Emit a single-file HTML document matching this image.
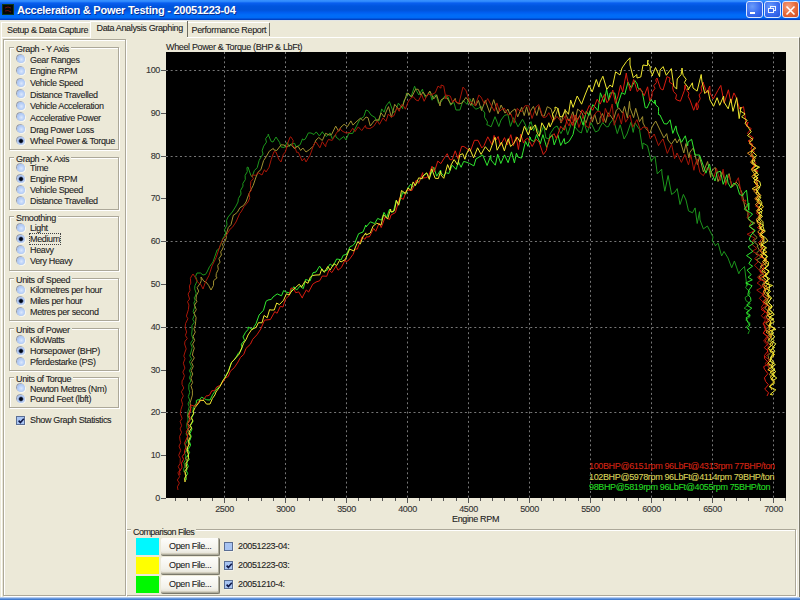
<!DOCTYPE html>
<html><head><meta charset="utf-8"><style>
*{margin:0;padding:0;box-sizing:border-box}
html,body{width:800px;height:600px;overflow:hidden;background:#ece9d8;font-family:"Liberation Sans",sans-serif;font-size:9.0px;color:#1e1e1e}
.abs{position:absolute}
.t{position:absolute;white-space:nowrap;line-height:10px;letter-spacing:-0.35px;-webkit-text-stroke-width:0.1px}
#title{position:absolute;left:0;top:0;width:800px;height:20px;background:linear-gradient(to bottom,#3a93ff 0px,#2c86fc 1.5px,#0a5ff0 3px,#0055de 6px,#0053da 10px,#005ef0 12.5px,#006cf8 15px,#006af6 18px,#0044c8 19px,#0040c0 20px)}
#title .tt{position:absolute;left:17px;top:4.70px;font-weight:bold;font-size:11px;line-height:11px;color:#fff;letter-spacing:-0.25px;white-space:nowrap;text-shadow:1px 1px 0 #0a3090}
.tb{position:absolute;top:1px;width:17px;height:17px;border:1px solid #dce8ff;border-radius:3px;background:radial-gradient(circle at 35% 30%,#6a9cfa,#3a6cf0 55%,#2454d8)}
.tb.c{background:radial-gradient(circle at 35% 30%,#f4a080,#e46838 55%,#cc4a24)}
#sep{position:absolute;left:0;top:20px;width:800px;height:1px;background:#e2e4e4}
.tabbox{position:absolute;border-top:1px solid #fff;border-left:1px solid #fff}
.page{position:absolute;left:1px;top:37px;width:799px;height:560px;border-top:1px solid #fff;border-left:1px solid #fff;border-right:1px solid #7c7a6c;box-shadow:inset -1px 0 0 #f4f2ea}
.etch{position:absolute;border:1px solid #aca899;box-shadow:1px 1px 0 #fff, inset 1px 1px 0 #fff}
.grp{position:absolute;left:9px;width:110px;border:1px solid #aca899;box-shadow:1px 1px 0 #fff, inset 1px 1px 0 #fff}
.gt{left:14px;padding:0 2px;background:#ece9d8}
.rb{position:absolute;left:17px;width:8.4px;height:8.4px;border-radius:50%;background:radial-gradient(circle at 55% 55%,#dce8fc,#b0caf6 55%,#98b4e8);box-shadow:-0.8px -0.8px 0 #8a92a4, 0.8px 0.8px 0 #fbfbf6}
.dot{position:absolute;left:1.2px;top:1.2px;width:6px;height:6px;border-radius:50%;background:radial-gradient(circle,#000818 0,#000818 1.4px,rgba(20,30,80,0.5) 2.2px,rgba(0,0,0,0) 3px)}
.focus{outline:1px dotted #444;outline-offset:0px}
.yl{left:128px;width:32px;text-align:right;color:#333}
.xl{width:40px;text-align:center;color:#333}
.sw{position:absolute;left:136px;width:23px;height:17px}
.btn{position:absolute;left:161px;width:59px;height:18px;background:linear-gradient(#fdfdfb,#f2f1ea 70%,#e2dfd2);border-radius:2px;box-shadow:inset -1px -1px 0 #b0ae9e, inset 0 -2px 0 #d4d0c0;border-right:1px solid #7a786a;border-bottom:1px solid #7a786a}
.cb{position:absolute;left:224px;width:8.6px;height:8.6px;border:1px solid #5a6e94;background:#a8c4f2;box-shadow:0.6px 0.6px 0 #fafaf4}
.leg{left:589px;width:186px;overflow:hidden}
</style></head><body>
<div id="title">
<div style="position:absolute;left:2px;top:4px;width:12px;height:11px;background:#060806;border:1px solid #103a18"><svg width="10" height="9" style="position:absolute;left:0;top:0"><path d="M2 3 Q5 1 8 3 M2 6 Q5 4.5 8 7" stroke="#6a1010" stroke-width="1" fill="none"/></svg></div>
<div class="tt">Acceleration &amp; Power Testing - 20051223-04</div>
<div class="tb" style="left:746px"><div style="position:absolute;left:2.8px;top:9.6px;width:5.6px;height:2.4px;background:#fff"></div></div>
<div class="tb" style="left:764px"><div style="position:absolute;left:4.6px;top:4px;width:6px;height:4.6px;border:1px solid #f0f4ff;border-top-width:1.6px"></div><div style="position:absolute;left:3px;top:6.2px;width:5.6px;height:4.6px;border:1px solid #f0f4ff;border-top-width:1.6px;background:#3a6aea"></div></div>
<div class="tb c" style="left:782px"><svg width="15" height="15" style="position:absolute;left:0;top:0"><path d="M3.5 4.5 L11.5 12.5 M11.5 4.5 L3.5 12.5" stroke="#fff" stroke-width="1.6"/></svg></div>
</div>
<div id="sep"></div>
<div class="page"></div>
<div class="tabbox" style="left:1px;top:22px;width:90px;height:15px"></div>
<div class="abs" style="left:90px;top:21px;width:97px;height:17px;background:#ece9d8;border-top:1px solid #fff;border-left:1px solid #fff"></div>
<div class="abs" style="left:187px;top:21px;width:1px;height:16px;background:#6e6c60"></div>
<div class="tabbox" style="left:188px;top:22px;width:81px;height:15px;border-left:none"></div>
<div class="abs" style="left:269px;top:23px;width:1px;height:13px;background:#7a786c"></div>
<div class="t" style="left:7.0px;top:24.88px;">Setup &amp; Data Capture</div>
<div class="t" style="left:96.5px;top:23.28px;">Data Analysis Graphing</div>
<div class="t" style="left:191.5px;top:24.98px;">Performance Report</div>
<div class="etch" style="left:3px;top:39px;width:123px;height:557px"></div>
<div class="grp" style="top:47px;height:103px"></div><div class="t gt" style="top:44.28px">Graph - Y Axis</div><b class="rb" style="top:55px"></b><div class="t" style="left:30px;top:54.58px;">Gear Ranges</div><b class="rb" style="top:67px"></b><div class="t" style="left:30px;top:66.24px;">Engine RPM</div><b class="rb" style="top:79px"></b><div class="t" style="left:30px;top:77.90px;">Vehicle Speed</div><b class="rb" style="top:90px"></b><div class="t" style="left:30px;top:89.56px;">Distance Travelled</div><b class="rb" style="top:102px"></b><div class="t" style="left:30px;top:101.22px;">Vehicle Acceleration</div><b class="rb" style="top:113px"></b><div class="t" style="left:30px;top:112.88px;">Accelerative Power</div><b class="rb" style="top:125px"></b><div class="t" style="left:30px;top:124.54px;">Drag Power Loss</div><b class="rb" style="top:137px"><i class="dot"></i></b><div class="t" style="left:30px;top:136.20px;">Wheel Power &amp; Torque</div><div class="grp" style="top:157px;height:53px"></div><div class="t gt" style="top:154.28px">Graph - X Axis</div><b class="rb" style="top:164px"></b><div class="t" style="left:30px;top:163.18px;">Time</div><b class="rb" style="top:175px"><i class="dot"></i></b><div class="t" style="left:30px;top:174.18px;">Engine RPM</div><b class="rb" style="top:186px"></b><div class="t" style="left:30px;top:185.18px;">Vehicle Speed</div><b class="rb" style="top:197px"></b><div class="t" style="left:30px;top:196.18px;">Distance Travelled</div><div class="grp" style="top:216px;height:55px"></div><div class="t gt" style="top:213.28px">Smoothing</div><b class="rb" style="top:224px"></b><div class="t" style="left:30px;top:223.18px;">Light</div><b class="rb" style="top:235px"><i class="dot"></i></b><div class="t" style="left:30px;top:234.18px;"><span class="focus">Medium</span></div><b class="rb" style="top:246px"></b><div class="t" style="left:30px;top:245.18px;">Heavy</div><b class="rb" style="top:257px"></b><div class="t" style="left:30px;top:256.18px;">Very Heavy</div><div class="grp" style="top:278px;height:43px"></div><div class="t gt" style="top:275.28px">Units of Speed</div><b class="rb" style="top:286px"></b><div class="t" style="left:30px;top:285.18px;">Kilometres per hour</div><b class="rb" style="top:297px"><i class="dot"></i></b><div class="t" style="left:30px;top:296.18px;">Miles per hour</div><b class="rb" style="top:308px"></b><div class="t" style="left:30px;top:307.18px;">Metres per second</div><div class="grp" style="top:328px;height:43px"></div><div class="t gt" style="top:325.28px">Units of Power</div><b class="rb" style="top:336px"></b><div class="t" style="left:30px;top:335.18px;">KiloWatts</div><b class="rb" style="top:347px"><i class="dot"></i></b><div class="t" style="left:30px;top:346.18px;">Horsepower (BHP)</div><b class="rb" style="top:358px"></b><div class="t" style="left:30px;top:357.18px;">Pferdestarke (PS)</div><div class="grp" style="top:377px;height:31px"></div><div class="t gt" style="top:374.28px">Units of Torque</div><b class="rb" style="top:384px"></b><div class="t" style="left:30px;top:383.58px;">Newton Metres (Nm)</div><b class="rb" style="top:395px"><i class="dot"></i></b><div class="t" style="left:30px;top:394.38px;">Pound Feet (lbft)</div>
<div class="cb" style="left:16px;top:415.5px;width:9px;height:9px"><svg width="9" height="9" style="position:absolute;left:0;top:0"><path d="M1.6 3.6 L3.4 5.6 L6.8 1.8" stroke="#101848" stroke-width="1.6" fill="none"/></svg></div>
<div class="t" style="left:30px;top:415.48px;">Show Graph Statistics</div>
<div class="t" style="left:166px;top:41.88px;">Wheel Power &amp; Torque (BHP &amp; LbFt)</div>
<svg width="620" height="446" style="position:absolute;left:166px;top:52px;background:#000"><line x1="58.5" y1="0" x2="58.5" y2="446" stroke="#767676" stroke-width="1" stroke-dasharray="2,2.67"/><line x1="119.5" y1="0" x2="119.5" y2="446" stroke="#767676" stroke-width="1" stroke-dasharray="2,2.67"/><line x1="180.5" y1="0" x2="180.5" y2="446" stroke="#767676" stroke-width="1" stroke-dasharray="2,2.67"/><line x1="241.5" y1="0" x2="241.5" y2="446" stroke="#767676" stroke-width="1" stroke-dasharray="2,2.67"/><line x1="302.5" y1="0" x2="302.5" y2="446" stroke="#767676" stroke-width="1" stroke-dasharray="2,2.67"/><line x1="363.5" y1="0" x2="363.5" y2="446" stroke="#767676" stroke-width="1" stroke-dasharray="2,2.67"/><line x1="424.5" y1="0" x2="424.5" y2="446" stroke="#767676" stroke-width="1" stroke-dasharray="2,2.67"/><line x1="485.5" y1="0" x2="485.5" y2="446" stroke="#767676" stroke-width="1" stroke-dasharray="2,2.67"/><line x1="546.5" y1="0" x2="546.5" y2="446" stroke="#767676" stroke-width="1" stroke-dasharray="2,2.67"/><line x1="607.5" y1="0" x2="607.5" y2="446" stroke="#767676" stroke-width="1" stroke-dasharray="2,2.67"/><line x1="0" y1="360.5" x2="620" y2="360.5" stroke="#767676" stroke-width="1" stroke-dasharray="2,2.67"/><line x1="0" y1="275.5" x2="620" y2="275.5" stroke="#767676" stroke-width="1" stroke-dasharray="2,2.67"/><line x1="0" y1="189.5" x2="620" y2="189.5" stroke="#767676" stroke-width="1" stroke-dasharray="2,2.67"/><line x1="0" y1="104.5" x2="620" y2="104.5" stroke="#767676" stroke-width="1" stroke-dasharray="2,2.67"/><line x1="0" y1="18.5" x2="620" y2="18.5" stroke="#767676" stroke-width="1" stroke-dasharray="2,2.67"/><polyline points="18.0,420.0 17.6,417.0 18.9,414.4 17.9,410.5 19.7,407.5 19.8,403.9 18.7,401.2 20.8,397.8 19.0,392.9 21.5,388.5 21.4,384.4 20.0,381.8 21.9,378.7 21.0,375.8 20.7,372.3 22.0,368.0 21.7,363.3 21.8,359.8 23.3,354.8 22.0,351.9 23.7,348.1 22.3,344.6 23.8,340.2 22.8,337.1 22.9,332.3 24.9,329.0 23.4,325.7 25.0,321.9 23.4,318.8 25.5,314.6 23.5,309.7 25.6,306.8 23.8,303.8 25.0,300.0 26.2,295.4 24.6,291.3 27.1,287.4 25.6,282.5 26.2,277.8 25.9,273.6 28.4,270.1 26.7,267.3 28.6,262.7 27.1,259.5 28.9,254.7 27.9,250.9 29.2,248.2 28.1,245.7 29.0,245.0 30.2,241.2 28.7,236.9 28.9,233.8 31.2,228.9 29.6,224.3 31.0,221.0 34.5,221.0 37.0,223.0 39.5,222.4 41.0,220.0 43.5,214.7 47.0,210.0 51.1,197.9 52.0,198.0 54.0,194.8 57.0,185.8 58.0,185.0 59.7,180.9 58.6,177.6 61.0,172.9 60.5,168.6 62.0,165.0 66.3,160.0 70.0,154.0 72.0,150.0 72.4,146.5 75.0,142.1 74.6,138.4 77.0,134.1 76.8,131.5 79.3,127.6 79.1,123.4 81.3,119.7 80.9,115.6 82.0,115.0 84.7,123.1 86.0,125.0 88.4,118.5 91.2,115.7 93.2,108.3 95.0,105.0 97.1,102.0 96.1,98.8 97.7,94.1 100.5,90.1 99.6,86.7 102.6,82.8 102.0,82.0 105.2,89.5 107.0,90.0 110.0,85.0 113.6,90.4 115.0,95.0 118.3,95.5 121.1,90.3 123.5,94.6 125.0,92.0 128.7,91.4 130.0,95.0 134.1,92.8 136.5,86.8 137.0,88.0 139.2,87.2 142.4,80.9 145.0,81.0 148.0,82.5 150.2,79.9 153.4,83.9 156.4,79.7 157.0,81.0 160.3,84.5 164.1,80.9 166.2,86.7 169.6,82.7 170.0,85.0 173.5,87.9 177.7,84.5 180.0,88.0 182.8,81.3 186.6,81.5 190.0,75.0 193.8,67.5 197.8,64.6 200.0,58.0 202.3,58.9 205.0,63.0 209.3,65.7 210.0,68.0 213.0,68.8 215.7,56.9 218.1,60.2 220.0,54.0 223.4,49.6 227.5,60.8 230.0,58.0 232.4,51.1 236.7,56.7 237.0,53.0 237.8,48.9 241.1,44.3 240.0,41.7 241.0,41.0 245.0,44.8 248.6,34.2 250.0,38.0 252.9,43.0 256.5,37.1 257.0,40.0 259.4,45.6 263.7,39.7 266.1,48.2 267.0,45.0 270.0,42.7 272.5,51.2 275.0,50.0 279.1,43.5 282.0,45.0 284.6,53.2 287.9,50.4 290.0,58.0 293.9,58.0 297.0,48.4 301.2,52.4 302.0,48.0 304.0,46.6 307.2,54.7 309.9,57.2 312.8,56.1 315.0,54.0 315.8,57.2 318.8,60.9 318.5,65.2 321.5,70.0 320.8,72.9 322.0,73.0 325.1,74.8 329.0,64.7 332.8,74.5 335.0,68.0 338.6,63.3 341.9,62.5 344.5,74.4 347.6,65.7 352.0,74.8 356.5,67.3 359.0,72.0 361.1,78.5 365.0,69.6 367.6,78.8 369.8,73.4 373.9,82.8 377.8,73.9 379.9,86.0 383.3,86.8 384.0,82.0 388.2,75.6 391.1,74.0 394.9,81.6 399.2,73.1 401.7,82.8 405.6,70.6 407.8,70.1 409.0,75.0 412.6,79.4 415.3,81.0 418.2,70.6 421.1,80.7 425.0,70.8 429.5,80.0 432.6,78.5 434.0,75.0 436.7,70.6 440.5,74.9 442.5,74.6 444.0,71.0 447.4,67.0 451.3,81.6 454.2,72.8 458.1,87.0 461.0,82.0 465.0,70.2 467.2,80.4 469.0,71.0 473.5,77.5 476.6,97.1 477.0,91.0 481.5,93.7 485.3,109.6 486.0,108.0 489.0,104.3 491.3,121.9 495.7,117.1 496.0,122.0 498.8,139.2 502.1,123.5 505.6,142.5 509.0,140.0 511.2,136.6 514.0,152.5 517.4,142.4 520.0,148.0 522.5,158.9 526.5,160.8 529.1,155.9 531.2,171.5 533.5,159.7 534.0,168.0 537.4,176.9 541.4,174.0 545.0,181.0 547.0,184.9 546.3,188.8 549.4,193.3 549.0,194.0 552.1,191.2 555.6,204.0 558.0,199.4 562.0,206.0 565.7,215.8 568.4,209.0 572.8,221.8 574.0,219.0 578.5,214.5 580.8,233.9 582.0,231.0 579.6,235.8 584.1,239.9 583.3,242.6 579.0,245.6 580.0,248.8 584.3,251.5 578.1,256.2 583.4,258.9 580.3,261.7 584.2,264.5 579.7,268.0 584.2,271.3 580.2,274.8 583.5,278.4 582.0,282.0" fill="none" stroke="#1c961c" stroke-width="1" stroke-linejoin="round"/><polyline points="19.0,430.0 20.3,425.9 19.0,421.9 21.0,417.4 19.3,414.7 21.5,409.8 19.6,406.0 22.6,402.6 20.3,398.3 22.4,394.1 22.4,389.3 22.0,388.0 21.5,383.1 23.6,380.5 22.1,377.2 24.1,374.7 21.6,371.6 24.3,367.8 21.8,363.8 23.6,359.1 25.0,355.7 24.0,351.0 25.0,348.0 26.4,343.1 26.4,338.2 24.9,333.6 26.6,330.6 24.9,326.1 26.8,322.0 25.2,318.7 27.3,314.3 25.5,310.4 28.3,305.9 26.4,303.0 27.0,300.0 28.3,296.2 26.6,292.1 28.7,288.4 27.1,284.3 29.3,280.1 27.9,276.8 29.2,273.6 29.7,269.3 30.1,265.4 28.1,261.3 30.3,257.7 28.5,253.2 31.0,249.2 30.0,248.0 30.3,243.8 32.7,239.1 31.1,235.7 34.3,231.2 35.3,228.5 35.0,225.0 38.0,229.4 40.0,230.0 42.6,233.4 45.0,238.0 47.5,233.4 47.6,228.7 51.2,225.6 50.0,225.0 50.3,221.5 52.3,217.4 51.7,213.3 54.1,210.1 52.9,206.7 55.4,203.0 54.7,199.8 56.0,198.0 57.4,194.8 56.4,192.2 59.0,189.3 60.4,185.7 60.0,183.0 62.3,175.5 65.0,172.6 67.4,163.0 68.0,163.0 71.4,160.2 73.9,155.7 77.3,153.7 80.0,150.0 83.2,141.1 87.2,133.4 90.0,125.0 92.1,120.1 94.9,117.7 97.6,108.6 100.0,105.0 103.3,99.2 107.3,96.4 108.0,98.0 110.8,98.5 115.1,92.8 118.0,93.0 120.8,95.1 124.9,92.4 128.8,97.0 130.0,95.0 132.1,94.4 134.7,98.5 136.8,96.0 140.0,100.0 143.6,97.5 147.4,94.1 150.0,88.0 152.8,85.5 156.3,88.5 159.6,81.3 163.0,83.0 165.5,82.7 169.7,74.1 172.7,79.3 175.0,75.0 178.1,72.3 181.4,74.7 184.9,68.9 187.0,73.1 190.0,70.0 194.5,66.1 196.9,68.6 200.0,65.0 202.0,65.7 204.3,74.0 205.0,73.0 208.6,68.3 212.6,67.8 215.1,60.9 218.2,65.1 220.0,60.0 222.5,54.6 225.4,65.3 228.7,52.3 232.8,57.4 237.0,53.0 240.8,41.7 242.0,41.0 245.7,45.1 249.6,37.2 252.2,37.3 255.0,43.3 257.0,40.0 260.4,44.9 263.8,39.0 267.8,46.9 270.7,42.8 274.0,54.0 275.0,48.0 278.4,45.9 281.1,46.0 285.0,52.4 289.2,46.4 290.0,50.0 292.9,51.9 296.3,50.9 299.9,45.4 302.0,48.0 304.9,53.5 307.3,46.0 309.6,53.9 312.4,48.4 315.5,58.5 319.3,48.4 323.6,60.4 325.0,56.0 327.7,47.7 332.1,61.8 335.1,53.0 339.0,61.1 341.9,57.0 344.1,63.0 345.0,60.0 349.0,56.9 351.7,64.9 355.7,55.3 358.2,63.6 360.6,54.8 362.9,63.5 365.0,58.0 367.4,54.4 370.8,63.5 373.1,54.3 375.9,63.8 378.2,64.0 381.3,54.7 385.0,56.7 388.1,68.0 392.2,56.2 395.0,71.1 399.1,57.0 400.0,63.0 403.1,69.1 406.9,59.7 409.0,69.4 411.6,57.1 416.0,60.8 419.9,71.1 424.0,58.7 426.4,70.1 428.7,62.3 431.5,72.1 434.0,70.5 434.0,66.0 436.4,61.5 439.7,70.6 442.1,60.7 444.0,63.0 447.4,67.9 450.3,58.2 452.9,55.9 456.5,61.1 458.5,54.4 461.4,65.8 463.5,49.4 464.0,56.0 467.6,65.7 469.7,56.3 473.5,69.7 476.6,64.6 477.0,71.0 479.9,76.5 484.0,81.2 486.0,75.0 489.7,69.0 494.0,78.0 497.9,85.9 500.7,81.6 502.0,88.0 505.4,92.2 509.2,86.7 511.0,91.0 513.5,86.8 517.8,101.0 520.0,91.5 522.9,105.8 524.0,100.0 527.4,95.9 531.4,112.6 533.5,104.7 537.4,119.9 541.6,109.5 544.7,125.4 545.0,120.0 549.1,115.4 552.0,129.6 556.2,119.9 559.8,131.4 563.1,121.6 565.9,134.8 568.5,133.0 570.0,130.0 572.5,132.6 576.2,141.4 578.9,155.5 582.0,160.0 581.8,163.6 582.7,167.9 588.8,171.1 583.2,174.2 588.5,178.1 586.3,180.9 591.2,185.5 587.4,189.1 592.3,193.6 591.0,194.0 593.4,198.2 589.7,201.9 595.8,205.0 590.3,207.8 596.2,212.6 593.7,217.6 597.5,221.4 592.6,225.2 598.8,229.0 596.2,233.3 599.8,237.0 599.0,240.0 596.8,243.9 600.9,246.4 596.9,249.6 602.2,252.7 598.6,256.2 603.7,260.3 600.1,265.0 604.5,269.3 603.9,273.7 599.5,277.8 604.7,281.0 600.7,285.2 603.0,286.0 601.8,290.2 604.8,293.5 602.1,296.1 605.8,299.5 602.0,303.5 602.9,307.6 607.1,311.2 601.8,314.3 606.4,318.2 603.4,322.7 607.0,326.2 605.0,328.0" fill="none" stroke="#a09030" stroke-width="1" stroke-linejoin="round"/><polyline points="12.0,438.0 11.4,434.8 13.4,431.1 11.3,428.0 13.6,424.7 11.9,420.8 14.0,418.0 12.2,414.7 14.1,411.4 14.3,406.6 12.7,403.3 14.7,398.4 13.0,394.1 14.7,390.7 14.0,388.0 13.6,384.4 15.5,380.3 14.1,376.9 15.6,373.7 14.2,369.4 16.1,366.3 14.3,361.7 15.0,357.3 16.6,352.4 15.4,347.9 17.3,343.9 15.4,339.8 17.8,336.0 16.0,332.4 16.1,328.4 17.0,328.0 18.4,323.7 16.8,320.1 18.9,316.1 17.3,311.2 19.0,306.7 17.8,304.1 19.0,300.0 20.2,296.9 18.6,292.0 19.0,289.2 21.3,286.6 19.4,283.4 20.6,280.0 19.1,275.2 19.6,271.4 21.9,266.7 20.4,264.1 21.0,262.0 22.4,257.6 22.9,253.1 21.5,249.7 23.6,247.1 22.1,242.1 24.0,238.5 23.4,233.8 24.8,231.2 24.4,226.5 25.0,225.0 27.0,222.0 29.0,225.0 31.6,230.2 34.7,232.2 37.0,237.0 39.5,229.9 42.9,223.6 46.0,214.0 47.0,212.0 50.1,205.7 54.5,192.4 57.0,187.0 60.2,183.6 64.1,177.1 66.4,175.3 70.0,170.0 73.8,161.3 75.0,160.0 78.1,154.5 82.0,150.0 83.8,145.8 82.9,141.4 85.2,138.7 84.4,133.8 84.9,129.4 87.4,126.7 85.7,123.4 87.0,123.0 89.6,123.4 91.9,120.6 96.0,123.0 98.4,117.7 100.0,120.0 103.0,115.4 105.2,107.5 108.0,99.6 110.0,100.0 112.7,107.1 115.0,110.0 117.4,102.3 119.4,100.0 122.1,90.0 124.3,84.8 125.0,85.0 127.2,88.6 126.4,92.8 129.4,96.7 130.4,99.4 130.0,100.0 132.4,100.4 136.1,108.9 138.4,106.3 140.0,110.0 144.0,103.3 148.1,91.8 150.0,90.0 153.9,95.8 156.3,89.7 159.7,94.8 160.0,92.0 162.4,87.5 166.2,88.4 170.3,81.3 174.0,76.2 175.0,78.0 177.1,79.6 180.1,81.0 183.8,80.5 186.8,76.2 189.0,79.7 190.0,78.0 192.3,74.9 195.8,78.6 199.4,73.4 200.0,76.0 203.9,76.6 207.7,74.3 211.3,68.8 213.5,72.4 217.0,65.9 220.0,69.3 222.3,62.0 225.0,65.0 228.0,63.7 230.9,55.7 233.2,59.3 235.3,52.8 237.0,53.0 239.4,57.2 242.0,50.0 244.4,46.6 247.1,44.5 250.0,48.0 252.3,48.9 255.7,42.7 258.1,49.3 261.8,42.0 265.0,43.0 269.3,40.7 272.0,34.1 275.0,36.2 275.0,33.0 277.7,33.9 280.0,46.7 280.0,43.0 284.3,44.1 286.7,50.4 289.0,47.6 290.0,50.0 293.0,51.1 297.0,35.0 300.1,38.8 303.5,49.7 305.0,50.0 309.3,53.8 312.8,43.1 315.0,45.0 318.6,52.2 321.7,46.5 325.0,53.0 328.4,59.2 330.9,50.9 333.5,59.5 335.0,58.0 338.2,56.0 342.4,63.1 345.0,62.0 348.2,71.2 351.2,56.4 355.0,60.0 359.1,53.7 362.7,53.8 366.0,66.5 370.0,55.0 372.8,52.6 377.0,65.4 380.0,65.0 382.8,60.7 387.2,69.5 391.0,64.4 395.4,70.2 399.6,63.5 400.0,68.0 403.1,74.0 406.0,62.7 408.3,75.5 410.4,65.7 412.9,75.5 417.3,63.1 420.0,74.1 422.9,75.7 424.0,70.0 428.1,63.3 431.2,59.2 433.9,59.4 437.3,70.3 439.3,56.4 442.9,64.9 444.0,60.0 446.2,52.0 448.2,73.2 452.3,61.5 455.4,72.1 457.4,59.9 459.6,70.2 461.0,68.0 464.0,63.1 466.7,75.2 470.9,67.6 474.5,78.1 477.0,75.0 481.3,75.6 484.2,86.8 486.0,85.0 488.2,82.0 492.5,93.7 494.0,91.0 497.0,86.9 501.3,101.4 505.6,92.3 508.6,106.6 511.0,101.0 515.4,110.4 518.9,102.4 522.5,112.9 524.8,102.7 527.9,118.3 529.0,113.0 531.1,107.0 533.9,120.6 537.4,123.7 541.4,115.3 545.0,120.0 548.0,124.9 550.4,116.3 554.1,128.7 557.1,117.2 559.6,133.3 562.6,123.0 566.4,134.1 570.0,130.0 572.4,125.7 576.5,149.0 580.0,148.0 578.8,150.8 582.4,153.9 578.9,157.5 583.5,162.2 580.9,165.4 585.6,169.7 583.1,174.2 588.3,178.9 581.1,182.2 588.8,186.2 587.0,188.0 586.1,192.4 590.9,196.6 586.1,199.2 593.4,202.8 588.6,206.7 592.2,209.9 588.4,213.2 592.9,217.8 595.2,221.5 591.4,225.3 594.9,228.0 591.1,231.1 594.0,233.0 595.8,235.5 590.7,238.1 597.1,242.4 593.3,246.4 598.3,251.2 595.3,255.1 599.4,259.6 595.3,263.7 599.4,267.8 596.9,272.1 600.1,274.6 599.0,278.0 597.6,280.6 600.8,284.6 597.6,289.1 602.4,293.8 601.5,298.2 602.3,301.8 599.2,304.9 603.4,307.7 598.9,311.6 602.8,314.5 602.7,317.6 601.0,318.0" fill="none" stroke="#a81608" stroke-width="1" stroke-linejoin="round"/><polyline points="20.0,428.0 19.6,424.9 21.7,421.7 20.1,418.2 22.3,414.4 20.6,410.5 23.3,407.3 21.3,404.1 23.6,400.6 22.0,397.8 24.6,393.1 23.3,389.2 24.0,388.0 25.3,384.3 23.9,381.7 26.0,377.0 24.4,373.6 27.0,369.4 25.4,366.4 27.6,362.0 27.0,360.0 27.3,355.6 30.4,351.1 30.3,348.6 31.0,348.0 33.2,347.8 35.7,345.1 37.0,346.0 40.7,347.8 44.0,348.0 46.9,342.2 50.0,338.0 54.1,333.4 56.8,329.3 59.0,325.0 62.2,319.5 65.5,310.3 66.0,310.0 68.8,307.3 72.6,300.8 74.0,300.0 76.2,295.6 75.3,292.2 78.6,288.3 77.0,284.9 79.5,280.3 82.1,277.4 82.0,275.0 85.7,276.9 86.0,278.0 90.0,271.7 93.1,263.0 97.5,258.2 100.0,249.3 102.0,248.0 105.3,247.4 107.0,245.0 111.2,241.9 115.5,243.8 117.6,238.6 120.0,240.0 123.7,241.0 127.9,234.7 130.6,238.1 134.8,233.2 135.0,235.0 137.3,236.6 139.6,227.5 144.1,228.9 147.0,220.7 150.0,220.0 153.6,214.1 157.1,219.4 161.5,218.0 162.0,215.0 164.2,212.0 166.9,214.4 170.6,207.0 172.9,207.3 175.0,208.0 177.2,203.3 180.6,202.3 184.1,194.6 186.8,193.6 189.0,191.0 190.0,188.0 192.6,181.7 197.0,180.0 199.8,173.0 200.0,175.0 204.4,169.8 208.6,171.6 211.7,166.4 215.4,168.2 218.0,160.4 220.7,165.5 223.5,157.3 225.0,160.0 227.3,160.0 230.2,148.3 232.4,153.1 236.7,140.4 239.7,142.4 242.0,136.0 244.8,132.0 246.9,135.3 250.3,131.8 254.8,127.4 257.0,124.0 260.8,121.2 263.5,125.4 267.8,115.2 270.7,124.2 274.6,118.0 275.0,121.0 277.6,123.5 280.4,120.8 282.8,121.6 286.1,113.2 290.1,117.4 292.4,109.7 295.1,115.3 297.6,109.5 300.0,110.0 303.4,111.4 307.9,113.9 309.9,107.0 313.8,104.6 316.7,103.1 321.1,113.5 324.8,103.5 325.0,108.0 329.3,113.2 331.7,102.3 334.8,111.5 338.5,102.9 342.1,110.7 345.5,99.9 348.4,110.9 350.4,101.3 352.0,105.0 355.5,106.1 359.5,89.4 362.0,94.4 364.1,85.1 365.0,88.0 368.3,89.7 370.6,82.5 374.3,91.7 376.9,82.7 380.7,95.4 384.0,85.0 386.2,82.6 388.2,92.9 391.9,82.9 394.7,93.5 398.2,86.5 399.0,92.0 403.1,89.4 407.0,82.6 409.0,73.0 411.6,66.6 414.0,63.7 417.1,73.1 420.3,59.1 422.9,63.5 426.8,52.6 429.0,55.0 432.0,58.6 434.4,40.8 438.0,50.3 440.6,37.4 442.8,48.4 444.0,41.0 446.3,40.8 448.7,41.0 451.7,55.6 452.0,52.0 455.7,40.6 458.8,42.4 462.0,30.0 465.4,36.0 468.9,28.5 471.3,32.1 472.0,36.0 476.1,39.0 479.2,55.6 481.0,56.0 484.9,47.6 488.3,51.5 489.0,48.0 489.7,52.9 492.6,55.5 492.5,59.7 492.4,62.5 494.0,63.0 498.1,71.7 501.0,72.0 504.1,67.8 506.8,81.4 509.9,73.9 511.0,80.0 515.5,90.3 519.3,83.8 521.7,93.8 522.0,90.0 525.6,87.3 529.1,103.0 533.5,103.0 536.0,110.0 539.9,121.2 543.5,112.0 545.0,120.0 549.0,129.0 551.1,120.4 554.4,119.2 557.2,132.3 560.9,122.7 562.0,131.0 564.9,135.9 567.8,131.1 570.8,133.0 573.6,142.4 576.6,143.8 578.0,141.0 580.5,138.1 582.8,158.3 583.0,151.0 580.8,153.7 578.3,157.1 586.6,162.0 582.3,166.5 586.9,171.4 583.1,174.4 589.2,178.7 585.0,183.0 583.1,187.6 587.6,191.4 582.1,194.8 586.8,199.4 580.5,203.6 585.6,207.2 582.8,211.6 586.6,214.2 581.1,218.1 585.2,222.7 582.0,225.3 586.3,227.8 579.7,231.0 586.1,233.7 583.0,238.0 581.9,242.3 584.6,245.7 584.9,248.7 580.7,253.2 585.8,256.1 580.4,260.5 584.3,263.3 580.1,265.8 581.7,270.0 584.1,273.1 581.5,275.6 583.0,278.0" fill="none" stroke="#30e830" stroke-width="1" stroke-linejoin="round"/><polyline points="14.0,423.0 13.7,419.4 16.0,415.3 15.4,411.2 17.5,407.3 16.3,404.4 18.6,401.3 18.6,398.7 20.3,394.4 18.4,391.4 20.0,388.0 21.7,384.1 20.3,379.7 22.9,375.4 21.4,371.6 24.2,366.7 23.0,363.0 24.8,358.1 24.2,355.1 25.0,353.0 28.3,354.2 30.0,353.0 33.2,349.0 36.8,348.3 40.6,343.6 41.0,344.0 43.5,343.1 45.8,338.7 48.5,338.8 50.7,334.9 54.3,333.3 57.0,330.0 59.1,326.1 62.2,324.5 64.4,319.1 68.2,315.8 72.0,310.0 74.4,305.5 77.7,302.5 80.0,296.4 84.4,292.2 86.7,287.3 90.9,282.8 94.7,277.1 98.5,268.1 100.0,268.0 104.4,267.5 108.8,259.6 111.1,261.3 114.3,254.3 117.0,255.0 119.5,247.0 123.1,243.5 125.0,236.0 127.6,236.5 129.7,240.7 132.8,239.9 136.3,246.1 137.0,244.0 140.4,237.8 142.5,240.2 146.8,232.1 150.0,230.0 153.6,228.8 156.3,224.0 160.7,224.3 163.0,218.1 165.9,220.6 170.0,214.0 172.0,218.2 175.4,215.5 179.3,207.5 180.0,210.0 183.0,207.9 187.1,202.3 189.1,197.1 191.5,197.0 192.0,195.0 196.2,184.9 199.0,187.4 200.0,185.0 203.4,184.8 207.7,176.5 209.8,179.3 213.2,171.0 215.2,175.6 219.1,165.2 223.6,167.5 225.0,163.0 229.4,160.6 233.7,145.8 237.4,147.3 240.3,138.8 242.0,138.0 245.9,138.6 250.2,128.3 252.7,131.4 256.7,120.6 257.0,126.0 259.7,125.7 262.4,124.6 266.0,114.1 268.3,119.9 271.8,109.1 274.9,111.6 277.0,108.0 281.2,101.7 283.9,107.7 286.2,107.7 289.2,98.8 291.9,106.6 295.7,94.4 297.9,94.5 300.0,96.0 304.4,99.2 308.4,88.3 312.0,88.3 315.8,95.9 317.9,93.8 321.8,84.8 326.0,92.8 328.1,83.4 330.0,88.0 332.2,84.5 334.4,93.6 338.5,85.6 341.3,93.0 344.8,82.7 347.4,93.6 350.2,84.7 352.4,97.5 354.8,82.1 357.5,91.1 359.0,88.0 361.8,86.0 366.2,94.5 370.0,87.1 373.1,90.2 377.3,102.5 380.3,98.6 381.0,95.0 383.7,86.4 388.1,81.6 390.4,86.7 394.7,74.3 398.3,78.2 401.2,67.1 404.0,68.0 406.5,73.4 409.1,62.9 411.6,68.2 414.0,63.0 416.1,57.8 419.5,62.7 423.3,53.4 426.8,58.3 431.2,47.2 434.2,52.1 436.0,48.0 438.4,42.4 441.0,50.8 444.0,46.0 446.8,38.0 449.5,51.5 452.0,44.0 454.5,33.1 456.7,39.9 460.3,21.0 461.0,26.0 464.3,39.0 467.7,27.5 471.3,39.6 474.0,36.0 478.2,43.7 481.6,34.8 483.7,48.7 486.0,44.0 486.1,40.3 489.0,36.3 487.7,33.8 490.5,30.5 489.8,27.9 491.0,26.0 494.5,36.7 497.0,38.0 501.0,24.6 504.0,26.0 503.3,30.0 507.3,32.7 506.6,35.9 507.5,39.5 510.5,42.8 509.6,47.0 511.0,48.0 514.4,49.2 518.4,38.5 519.0,33.0 519.8,36.8 522.9,41.2 522.2,44.5 524.0,48.0 527.7,58.3 530.4,50.7 531.0,58.0 532.5,55.2 531.7,51.5 534.2,46.7 533.1,42.9 535.8,39.5 535.1,35.0 537.4,30.7 537.0,30.0 540.8,40.9 543.8,34.0 544.0,41.0 547.3,46.9 551.8,38.5 554.8,33.4 558.2,51.2 562.4,37.8 564.9,50.8 567.9,40.9 570.0,45.0 573.7,57.0 577.5,54.7 580.6,74.4 582.0,70.0 581.1,73.8 585.3,76.7 581.4,81.5 587.5,86.0 582.0,88.9 586.9,92.5 584.9,96.7 588.4,99.3 585.2,103.8 588.0,108.0 589.8,111.7 586.0,116.3 592.1,119.2 587.6,123.0 592.5,127.9 589.1,131.9 592.4,135.0 589.6,138.2 594.4,143.1 589.7,147.7 592.0,148.0 593.8,150.5 589.7,154.2 594.2,156.8 590.5,161.2 594.9,165.8 590.9,168.7 595.0,172.9 591.3,175.6 598.5,179.5 592.5,182.1 596.8,185.3 595.0,188.0 592.5,190.8 598.2,194.8 593.3,198.5 598.3,202.1 594.1,204.9 600.8,207.6 595.4,212.0 598.1,216.1 594.0,219.0 598.4,223.6 592.7,226.5 599.7,230.3 596.4,234.3 599.6,237.9 598.0,238.0 596.7,242.8 599.7,246.8 596.9,250.5 600.5,253.6 595.1,257.4 602.1,261.6 598.3,265.1 602.3,268.2 597.6,271.2 598.8,276.0 600.0,278.0 597.0,281.1 602.4,284.8 599.0,288.9 602.2,291.6 598.3,295.6 602.0,298.9 598.4,303.6 598.7,306.8 603.5,311.5 597.6,314.7 598.5,317.2 601.9,321.7 598.4,325.8 599.6,329.4 602.4,332.7 598.7,337.1 602.6,340.7 601.0,344.0" fill="none" stroke="#d81c10" stroke-width="1" stroke-linejoin="round"/><polyline points="19.0,430.0 18.5,426.3 20.2,423.8 18.6,419.4 21.1,415.8 19.8,411.3 21.7,408.4 22.5,405.7 22.3,401.4 21.3,397.9 21.8,394.7 23.4,392.1 22.3,389.2 23.0,388.0 24.4,384.5 22.9,380.3 25.5,376.0 24.2,373.4 26.8,368.7 25.3,365.4 27.9,361.1 27.0,360.0 29.1,355.5 33.5,349.9 34.0,348.0 38.0,348.6 40.5,352.1 44.0,352.0 46.4,346.5 48.9,343.0 50.0,340.0 54.1,334.4 56.8,328.7 59.0,326.0 62.5,319.3 65.4,310.8 66.0,310.0 70.3,305.3 73.3,301.9 74.0,300.0 77.7,291.2 80.3,287.1 82.0,283.0 85.7,277.5 90.1,275.4 92.4,270.7 96.0,270.8 98.0,263.5 101.2,265.7 103.6,257.6 105.0,258.0 108.2,258.0 110.7,251.0 113.4,252.6 117.6,248.2 120.4,241.8 123.3,243.0 125.0,240.0 129.3,235.8 133.2,232.2 135.5,235.2 138.9,229.4 142.0,231.3 144.3,225.2 146.7,223.5 150.0,223.0 153.7,222.9 155.8,216.8 158.3,220.4 161.8,214.5 164.1,218.1 167.8,211.7 170.7,213.5 173.5,208.5 175.0,210.0 179.3,207.5 183.6,197.2 187.9,198.9 191.6,190.0 194.4,191.9 196.8,185.0 199.8,180.9 200.0,183.0 204.2,181.1 207.1,174.1 210.7,171.2 215.0,173.1 217.5,162.8 221.7,166.9 224.6,157.0 225.0,160.0 228.4,158.7 230.4,148.3 232.7,153.2 235.5,138.5 239.4,141.3 242.0,136.0 244.8,138.2 247.1,129.9 249.3,133.7 252.7,125.8 256.2,126.8 257.0,124.0 260.7,120.8 263.3,127.4 265.6,116.8 269.2,126.3 272.4,126.5 274.6,119.1 275.0,123.0 277.8,126.3 281.6,112.6 284.0,118.3 285.0,113.0 288.1,107.6 291.7,113.0 293.8,102.9 296.7,101.7 298.9,107.3 300.0,103.0 303.4,96.0 307.6,105.8 311.6,95.8 315.1,102.4 319.3,94.7 323.5,99.8 325.0,96.0 329.0,85.3 331.1,98.2 335.4,90.2 338.4,98.9 340.0,93.0 342.3,86.7 344.6,94.5 347.5,91.8 351.2,85.2 354.2,90.0 355.0,86.0 358.4,74.3 362.4,83.0 364.8,74.6 365.0,78.0 369.2,72.8 371.3,81.1 373.4,84.4 375.8,70.8 380.2,78.1 382.9,70.7 384.0,75.0 386.4,70.1 387.5,66.4 386.4,62.1 389.1,57.8 389.0,55.0 391.6,56.2 393.6,64.1 396.0,65.0 399.4,58.3 402.5,62.3 404.7,48.1 407.1,55.4 409.0,50.0 411.2,44.0 415.6,52.2 419.0,43.0 423.0,33.2 426.2,40.0 430.3,27.5 432.9,35.1 434.0,30.0 436.9,24.2 440.8,37.4 444.0,33.0 446.4,35.0 449.6,19.8 454.0,23.0 456.0,16.0 460.5,9.5 464.0,5.8 464.0,13.0 467.3,25.7 470.8,22.5 471.0,26.0 474.8,25.0 477.0,13.0 481.4,13.7 482.0,8.0 481.6,10.7 484.2,14.5 484.2,19.2 486.2,22.1 486.0,24.0 489.5,15.5 493.6,24.7 494.0,18.0 497.1,14.6 500.3,23.3 502.0,21.0 505.3,16.6 507.8,34.2 510.7,37.1 511.0,30.0 511.3,26.9 515.1,22.6 515.6,19.2 516.0,16.0 516.5,20.1 517.2,23.4 520.2,27.3 518.4,30.6 522.0,35.4 522.0,38.0 526.4,30.8 527.0,36.0 531.1,39.1 535.2,22.5 536.0,30.0 538.8,41.5 542.0,38.3 544.0,48.0 547.6,54.3 551.1,45.7 553.7,53.3 557.6,44.1 558.0,50.0 562.2,56.8 564.8,46.9 567.0,59.4 570.7,45.7 573.2,66.6 575.0,55.0 574.3,59.1 579.1,61.9 575.6,64.8 581.2,68.3 579.0,71.2 582.0,75.0 585.3,79.8 581.5,83.5 587.0,87.5 583.2,90.7 588.7,95.6 585.6,99.0 587.0,100.0 590.6,103.5 586.6,107.5 586.2,111.7 593.6,115.2 587.9,118.0 591.3,120.6 587.6,123.2 592.0,125.9 587.9,130.0 594.0,134.9 592.0,138.0 589.9,141.7 594.9,145.7 590.8,149.9 595.3,152.8 591.9,157.2 596.1,161.2 592.3,164.9 597.0,169.8 597.0,174.4 598.1,178.0 594.3,181.5 598.0,186.2 597.0,188.0 594.9,192.3 599.4,195.3 596.8,199.8 601.2,204.1 598.2,207.6 602.6,210.1 602.3,213.0 598.7,215.9 603.2,219.9 600.2,223.3 602.0,228.0 599.3,230.9 606.5,233.5 599.9,236.4 604.5,239.3 600.9,243.3 605.0,246.6 602.4,250.4 606.0,254.0 602.8,256.5 606.8,260.6 601.2,263.7 607.8,267.0 605.0,268.0 603.7,272.9 603.1,277.5 607.5,280.7 603.4,283.9 608.1,288.6 603.8,292.3 608.6,295.5 603.6,298.8 608.6,302.5 604.3,305.2 606.0,308.0 608.0,310.9 604.8,314.3 609.0,317.1 604.1,320.1 608.7,323.4 605.2,327.2 608.6,331.2 603.2,334.7 609.8,337.8 604.2,342.4 607.0,343.0" fill="none" stroke="#f0e830" stroke-width="1" stroke-linejoin="round"/><polyline points="586.0,98.0 585.0,101.5 589.5,106.3 585.6,110.1 590.0,114.1 585.4,117.5 587.7,120.8 591.3,125.5 588.2,129.3 591.6,133.6 586.1,136.9 591.0,138.0 593.2,142.7 590.3,146.9 594.9,151.4 597.5,155.0 590.8,159.3 595.6,163.8 591.8,166.6 595.2,170.1 593.1,174.0 596.4,179.0 595.0,181.0 593.8,184.3 598.1,187.3 597.5,190.6 594.6,195.3 600.9,200.0 594.4,202.6 599.0,206.9 596.7,209.5 600.6,214.4 596.1,218.9 601.5,222.3 596.9,225.0 600.0,228.0 603.1,230.6 598.5,235.3 599.4,239.5 603.2,244.5 600.8,249.4 601.1,252.7 605.6,255.9 601.2,259.0 605.7,263.6 604.0,265.0 602.6,267.6 605.3,270.4 602.2,273.9 609.2,276.5 602.3,279.9 605.8,283.5 602.6,288.1 606.9,292.0 602.3,296.7 607.2,300.0 607.6,304.2 603.7,307.4 605.0,308.0 601.6,311.4 606.7,314.1 602.1,317.9 608.8,320.8 604.0,325.4 608.6,329.2 603.9,333.8 606.0,338.0" fill="none" stroke="#f8d020" stroke-width="1" stroke-linejoin="round"/><polyline points="584.0,88.0 583.3,91.6 589.9,96.3 581.5,101.2 587.8,105.5 584.5,110.4 589.2,114.2 585.2,117.2 590.7,120.0 585.8,124.4 589.0,128.0 591.5,131.0 591.5,135.0 587.6,139.1 592.6,143.3 588.7,146.6 593.0,149.6 589.3,152.6 593.4,155.5 590.5,158.7 595.1,163.3 590.3,167.1 591.5,171.1 593.0,173.0 596.1,175.7 591.7,179.9 597.2,184.5 596.9,189.4 593.2,192.0 597.0,195.9 594.4,199.1 597.6,202.2 595.2,204.7 600.5,207.6 599.9,211.7 594.2,214.4 598.0,218.0 600.2,221.9 596.6,224.9 600.2,228.5 597.8,232.9 602.1,235.8 597.4,239.3 599.2,242.8 602.8,245.7 598.4,250.4 603.0,254.3 602.0,258.0 601.0,261.3 603.7,265.7 603.9,268.5 599.7,271.3 604.6,275.9 600.0,280.2 605.6,283.9 603.0,288.0" fill="none" stroke="#e89020" stroke-width="1" stroke-linejoin="round"/><polyline points="589.0,108.0 587.5,110.8 592.0,115.6 588.6,118.8 592.6,122.8 587.1,126.4 593.8,129.7 594.7,133.7 590.4,137.1 591.5,140.0 594.8,143.6 591.4,147.7 594.0,148.0 596.1,151.0 593.3,155.3 596.7,158.7 592.5,161.2 596.6,164.4 591.0,169.2 597.5,173.4 593.5,176.2 599.4,179.1 594.8,182.8 599.5,185.7 601.9,188.9 595.6,193.0 600.7,195.9 598.0,198.0 597.0,201.8 601.5,204.5 598.2,208.8 602.7,213.1 599.0,216.5 603.2,219.0 598.4,223.8 603.7,226.7 599.1,230.4 603.8,233.5 603.0,238.0 601.3,241.5 605.7,246.1 601.9,250.0 606.4,254.9 602.8,257.6 608.3,262.4 603.4,265.2 608.4,269.7 603.8,272.9 609.8,277.6 607.0,278.0 605.5,281.2 608.8,284.9 604.7,288.3 609.8,291.8 606.1,296.4 609.0,299.2 606.3,302.2 605.3,305.6 604.2,309.3 609.4,312.6 605.0,315.4 609.8,319.6 605.7,322.5 610.8,326.0 608.0,328.0" fill="none" stroke="#f0f040" stroke-width="1" stroke-linejoin="round"/></svg>
<svg width="800" height="600" style="position:absolute;left:0;top:0"><line x1="161" y1="498.5" x2="166" y2="498.5" stroke="#555" stroke-width="1"/><line x1="161" y1="455.5" x2="166" y2="455.5" stroke="#555" stroke-width="1"/><line x1="161" y1="412.5" x2="166" y2="412.5" stroke="#555" stroke-width="1"/><line x1="161" y1="370.5" x2="166" y2="370.5" stroke="#555" stroke-width="1"/><line x1="161" y1="327.5" x2="166" y2="327.5" stroke="#555" stroke-width="1"/><line x1="161" y1="284.5" x2="166" y2="284.5" stroke="#555" stroke-width="1"/><line x1="161" y1="241.5" x2="166" y2="241.5" stroke="#555" stroke-width="1"/><line x1="161" y1="198.5" x2="166" y2="198.5" stroke="#555" stroke-width="1"/><line x1="161" y1="156.5" x2="166" y2="156.5" stroke="#555" stroke-width="1"/><line x1="161" y1="113.5" x2="166" y2="113.5" stroke="#555" stroke-width="1"/><line x1="161" y1="70.5" x2="166" y2="70.5" stroke="#555" stroke-width="1"/><line x1="175.5" y1="498" x2="175.5" y2="501" stroke="#555" stroke-width="1"/><line x1="187.5" y1="498" x2="187.5" y2="501" stroke="#555" stroke-width="1"/><line x1="200.5" y1="498" x2="200.5" y2="501" stroke="#555" stroke-width="1"/><line x1="212.5" y1="498" x2="212.5" y2="501" stroke="#555" stroke-width="1"/><line x1="224.5" y1="498" x2="224.5" y2="503" stroke="#555" stroke-width="1"/><line x1="236.5" y1="498" x2="236.5" y2="501" stroke="#555" stroke-width="1"/><line x1="248.5" y1="498" x2="248.5" y2="501" stroke="#555" stroke-width="1"/><line x1="261.5" y1="498" x2="261.5" y2="501" stroke="#555" stroke-width="1"/><line x1="273.5" y1="498" x2="273.5" y2="501" stroke="#555" stroke-width="1"/><line x1="285.5" y1="498" x2="285.5" y2="503" stroke="#555" stroke-width="1"/><line x1="297.5" y1="498" x2="297.5" y2="501" stroke="#555" stroke-width="1"/><line x1="309.5" y1="498" x2="309.5" y2="501" stroke="#555" stroke-width="1"/><line x1="322.5" y1="498" x2="322.5" y2="501" stroke="#555" stroke-width="1"/><line x1="334.5" y1="498" x2="334.5" y2="501" stroke="#555" stroke-width="1"/><line x1="346.5" y1="498" x2="346.5" y2="503" stroke="#555" stroke-width="1"/><line x1="358.5" y1="498" x2="358.5" y2="501" stroke="#555" stroke-width="1"/><line x1="370.5" y1="498" x2="370.5" y2="501" stroke="#555" stroke-width="1"/><line x1="382.5" y1="498" x2="382.5" y2="501" stroke="#555" stroke-width="1"/><line x1="395.5" y1="498" x2="395.5" y2="501" stroke="#555" stroke-width="1"/><line x1="407.5" y1="498" x2="407.5" y2="503" stroke="#555" stroke-width="1"/><line x1="419.5" y1="498" x2="419.5" y2="501" stroke="#555" stroke-width="1"/><line x1="431.5" y1="498" x2="431.5" y2="501" stroke="#555" stroke-width="1"/><line x1="443.5" y1="498" x2="443.5" y2="501" stroke="#555" stroke-width="1"/><line x1="456.5" y1="498" x2="456.5" y2="501" stroke="#555" stroke-width="1"/><line x1="468.5" y1="498" x2="468.5" y2="503" stroke="#555" stroke-width="1"/><line x1="480.5" y1="498" x2="480.5" y2="501" stroke="#555" stroke-width="1"/><line x1="492.5" y1="498" x2="492.5" y2="501" stroke="#555" stroke-width="1"/><line x1="504.5" y1="498" x2="504.5" y2="501" stroke="#555" stroke-width="1"/><line x1="517.5" y1="498" x2="517.5" y2="501" stroke="#555" stroke-width="1"/><line x1="529.5" y1="498" x2="529.5" y2="503" stroke="#555" stroke-width="1"/><line x1="541.5" y1="498" x2="541.5" y2="501" stroke="#555" stroke-width="1"/><line x1="553.5" y1="498" x2="553.5" y2="501" stroke="#555" stroke-width="1"/><line x1="565.5" y1="498" x2="565.5" y2="501" stroke="#555" stroke-width="1"/><line x1="578.5" y1="498" x2="578.5" y2="501" stroke="#555" stroke-width="1"/><line x1="590.5" y1="498" x2="590.5" y2="503" stroke="#555" stroke-width="1"/><line x1="602.5" y1="498" x2="602.5" y2="501" stroke="#555" stroke-width="1"/><line x1="614.5" y1="498" x2="614.5" y2="501" stroke="#555" stroke-width="1"/><line x1="626.5" y1="498" x2="626.5" y2="501" stroke="#555" stroke-width="1"/><line x1="638.5" y1="498" x2="638.5" y2="501" stroke="#555" stroke-width="1"/><line x1="651.5" y1="498" x2="651.5" y2="503" stroke="#555" stroke-width="1"/><line x1="663.5" y1="498" x2="663.5" y2="501" stroke="#555" stroke-width="1"/><line x1="675.5" y1="498" x2="675.5" y2="501" stroke="#555" stroke-width="1"/><line x1="687.5" y1="498" x2="687.5" y2="501" stroke="#555" stroke-width="1"/><line x1="699.5" y1="498" x2="699.5" y2="501" stroke="#555" stroke-width="1"/><line x1="712.5" y1="498" x2="712.5" y2="503" stroke="#555" stroke-width="1"/><line x1="724.5" y1="498" x2="724.5" y2="501" stroke="#555" stroke-width="1"/><line x1="736.5" y1="498" x2="736.5" y2="501" stroke="#555" stroke-width="1"/><line x1="748.5" y1="498" x2="748.5" y2="501" stroke="#555" stroke-width="1"/><line x1="760.5" y1="498" x2="760.5" y2="501" stroke="#555" stroke-width="1"/><line x1="773.5" y1="498" x2="773.5" y2="503" stroke="#555" stroke-width="1"/><line x1="785.5" y1="498" x2="785.5" y2="501" stroke="#555" stroke-width="1"/></svg>
<div class="t yl" style="top:493.48px">0</div><div class="t yl" style="top:450.48px">10</div><div class="t yl" style="top:407.48px">20</div><div class="t yl" style="top:365.48px">30</div><div class="t yl" style="top:322.48px">40</div><div class="t yl" style="top:279.48px">50</div><div class="t yl" style="top:236.48px">60</div><div class="t yl" style="top:193.48px">70</div><div class="t yl" style="top:151.48px">80</div><div class="t yl" style="top:108.48px">90</div><div class="t yl" style="top:65.48px">100</div><div class="t xl" style="left:204.5px;top:504.28px">2500</div><div class="t xl" style="left:265.5px;top:504.28px">3000</div><div class="t xl" style="left:326.5px;top:504.28px">3500</div><div class="t xl" style="left:387.5px;top:504.28px">4000</div><div class="t xl" style="left:448.5px;top:504.28px">4500</div><div class="t xl" style="left:509.5px;top:504.28px">5000</div><div class="t xl" style="left:570.5px;top:504.28px">5500</div><div class="t xl" style="left:631.5px;top:504.28px">6000</div><div class="t xl" style="left:692.5px;top:504.28px">6500</div><div class="t xl" style="left:753.5px;top:504.28px">7000</div>
<div class="t" style="left:452px;top:513.88px;">Engine RPM</div>
<div class="t leg" style="left:589px;top:461.08px;color:#d42414">100BHP@6151rpm 96LbFt@4313rpm 77BHP/ton</div>
<div class="t leg" style="left:589px;top:471.58px;color:#dcd45a">102BHP@5978rpm 96LbFt@4114rpm 79BHP/ton</div>
<div class="t leg" style="left:589px;top:481.88px;color:#24dc24">98BHP@5819rpm 96LbFt@4055rpm 75BHP/ton</div>
<div class="abs" style="left:127px;top:529px;width:669px;height:67px;border-top:1px solid #aca899;border-right:1px solid #aca899;border-bottom:1px solid #aca899;box-shadow:1px 1px 0 #fff, inset 0 1px 0 #fff"></div>
<div class="t" style="left:131px;top:526.68px;padding:0 2px;background:#ece9d8;letter-spacing:-0.55px">Comparison Files</div>
<div class="sw" style="top:538px;background:#00f8ff"></div>
<div class="sw" style="top:557px;background:#ffff00"></div>
<div class="sw" style="top:576px;background:#00f800"></div>
<div class="btn" style="top:538px"></div>
<div class="btn" style="top:557px"></div>
<div class="btn" style="top:576px"></div>
<div class="t" style="left:169px;top:541.18px;">Open File...</div>
<div class="t" style="left:169px;top:560.18px;">Open File...</div>
<div class="t" style="left:169px;top:579.18px;">Open File...</div>
<div class="cb" style="top:542px"></div>
<div class="cb" style="top:561px"><svg width="9" height="9" style="position:absolute;left:0;top:0"><path d="M1.6 3.6 L3.4 5.6 L6.8 1.8" stroke="#101848" stroke-width="1.6" fill="none"/></svg></div>
<div class="cb" style="top:580px"><svg width="9" height="9" style="position:absolute;left:0;top:0"><path d="M1.6 3.6 L3.4 5.6 L6.8 1.8" stroke="#101848" stroke-width="1.6" fill="none"/></svg></div>
<div class="t" style="left:238px;top:541.18px;">20051223-04:</div>
<div class="t" style="left:238px;top:560.18px;">20051223-03:</div>
<div class="t" style="left:238px;top:579.18px;">20051210-4:</div>
<div class="abs" style="left:0;top:597px;width:800px;height:3px;background:linear-gradient(#dce6f4 0px,#8ab0e8 1px,#4c84d4 2px,#3a74c8 3px)"></div>
</body></html>
